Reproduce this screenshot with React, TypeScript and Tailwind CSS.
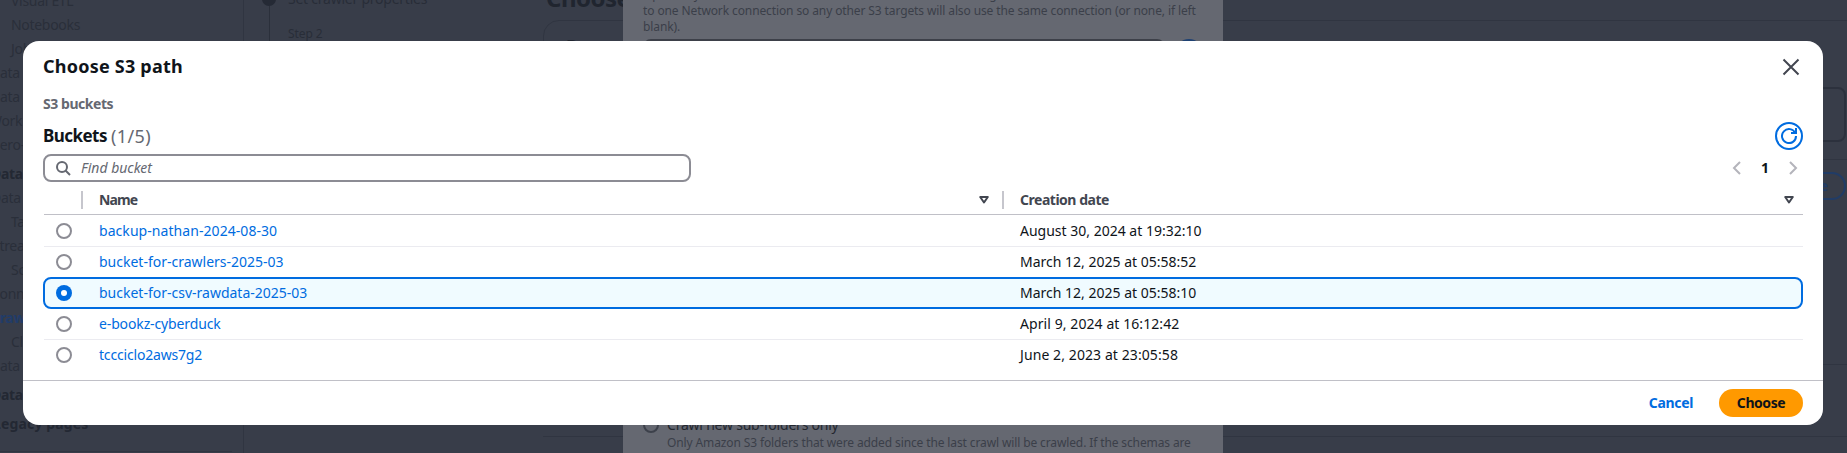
import type { ReactNode } from "react";

type NavItem = { label: string; className: string };

const NAV: NavItem[] = [
  { label: "Visual ETL", className: "pl-[11px]" },
  { label: "Notebooks", className: "pl-[11px]" },
  { label: "Job run", className: "pl-[11px]" },
  { label: "Data", className: "-ml-[10px]" },
  { label: "Data", className: "-ml-[10px]" },
  { label: "Work", className: "-ml-[11px]" },
  { label: "Zero-", className: "-ml-[8px]" },
  { label: "Data", className: "-ml-[9px] mt-[5px] font-bold text-[#232833]" },
  { label: "Data", className: "-ml-[9px]" },
  { label: "Tabl", className: "pl-[11px]" },
  { label: "Strea", className: "-ml-[8px]" },
  { label: "Sch", className: "pl-[11px]" },
  { label: "Conn", className: "-ml-[9px]" },
  { label: "Craw", className: "-ml-[9px] font-bold text-[#213c69]" },
  { label: "Clas", className: "pl-[11px]" },
  { label: "Data", className: "-ml-[10px]" },
  { label: "Data", className: "-ml-[9px] mt-[5px] font-bold text-[#232833]" },
  { label: "Legacy pages", className: "-ml-[7px] mt-[5px] font-bold tracking-[0.15px] text-[#232833]" },
];

type Bucket = {
  name: string;
  date: string;
  selected?: boolean;
  row: string;
  nameTracking?: string;
  dateTracking?: string;
};

const BUCKETS: Bucket[] = [
  { name: "backup-nathan-2024-08-30", date: "August 30, 2024 at 19:32:10", row: "ml-px h-8 border-b border-[#ebebf0] pl-3", nameTracking: "tracking-[0.06px]" },
  { name: "bucket-for-crawlers-2025-03", date: "March 12, 2025 at 05:58:52", row: "ml-px h-[30px] pl-3" },
  { name: "bucket-for-csv-rawdata-2025-03", date: "March 12, 2025 at 05:58:10", selected: true, row: "h-8 rounded-lg border-2 border-[#006ce0] bg-[#f0fbff] pl-[11px]" },
  { name: "e-bookz-cyberduck", date: "April 9, 2024 at 16:12:42", row: "ml-px h-[31px] border-b border-[#ebebf0] pl-3", nameTracking: "tracking-[-0.13px]", dateTracking: "tracking-[0.08px]" },
  { name: "tccciclo2aws7g2", date: "June 2, 2023 at 23:05:58", row: "ml-px h-[30px] pl-3", nameTracking: "tracking-[-0.18px]", dateTracking: "tracking-[0.09px]" },
];

function Icon({ size, className, children }: { size: number; className?: string; children: ReactNode }) {
  return (
    <svg width={size} height={size} viewBox="0 0 16 16" fill="none" stroke="currentColor" strokeWidth="2" className={className}>
      {children}
    </svg>
  );
}

function SortCaret() {
  return (
    <Icon size={16} className="text-[#424650]">
      <path d="M4.2 5h7.6L8 10.5z" strokeLinejoin="round" />
    </Icon>
  );
}

function Radio({ selected }: { selected?: boolean }) {
  return selected ? (
    <span className="flex h-4 w-4 shrink-0 items-center justify-center rounded-full bg-[#006ce0]">
      <span className="h-1.5 w-1.5 rounded-full bg-white" />
    </span>
  ) : (
    <span className="h-4 w-4 shrink-0 rounded-full border-2 border-[#8c8c94] bg-white" />
  );
}

function Backdrop() {
  return (
    <div className="flex h-full">
      <nav className="flex h-full w-[244px] shrink-0 flex-col overflow-hidden border-r border-[#303541] text-sm leading-6 tracking-[-0.3px] text-[#2a2f3a]">
        <div className="-mt-[11px] flex flex-col">
          {NAV.map((item, i) => (
            <div key={i} className={`h-6 whitespace-nowrap ${item.className}`}>{item.label}</div>
          ))}
        </div>
        <div className="mt-[15px] mr-[11px] border-t border-[#303541]" />
      </nav>

      <div className="flex w-[299px] shrink-0 pl-[18px]">
        <div className="flex w-[14px] flex-col items-center">
          <span className="-mt-2 h-[14px] w-[14px] shrink-0 rounded-full bg-[#252a35]" />
          <span className="h-10 w-px bg-[#2b303b]" />
        </div>
        <div className="pl-3 whitespace-nowrap text-[#282d38]">
          <div className="-mt-[13px] h-6 text-sm leading-6 tracking-[-0.24px]">Set crawler properties</div>
          <div className="mt-[11px] text-xs leading-6 tracking-[-0.1px]">Step 2</div>
        </div>
      </div>

      <main className="flex min-w-0 flex-1 flex-col text-[#20252f]">
        <div className="-mt-4 h-9 pl-[3px] text-2xl leading-7 font-bold tracking-[-0.5px]">Choose</div>
        <div className="-mr-5 flex h-[345px] flex-col rounded-tl-2xl border border-[#303541]">
          <div className="mt-[13px] pl-[22px] text-lg leading-6 font-bold tracking-[-0.4px]">Data sources</div>
          <div className="mt-[29px] mr-5 h-[55px] rounded-lg border-2 border-[#2c313d]" />
          <div className="mt-[17px] border-t border-[#303541]" />
          <div className="mt-3 mr-5 ml-auto flex h-7 w-[84px] items-center justify-end rounded-full border-2 border-[#213c66] pr-4 text-sm font-bold text-[#213c66]">Update</div>
        </div>
        <div className="mt-[71px] border-t border-[#303541]" />
      </main>
    </div>
  );
}

function SidePanel() {
  return (
    <section className="absolute top-0 left-[623px] flex h-full w-[600px] flex-col overflow-hidden bg-[#656871] pl-5 text-xs leading-4 whitespace-nowrap text-[#3b3f49]">
      <div className="-mt-[13px] h-4 tracking-[-0.11px]">Optionally include a Network connection to use with this S3 target. Note that each</div>
      <div className="h-4 tracking-[-0.11px]">to one Network connection so any other S3 targets will also use the same connection (or none, if left</div>
      <div className="h-4 tracking-[-0.11px]">blank).</div>
      <div className="mt-1 flex gap-[10px]">
        <div className="h-7 w-[522px] rounded-lg border-2 border-[#3d4049]" />
        <div className="h-7 w-7 rounded-full border-2 border-[#1f4273]" />
      </div>
      <div className="mt-[348px] flex gap-2">
        <span className="mt-[2px] h-4 w-4 shrink-0 rounded-full border-2 border-[#3d414b]" />
        <div>
          <div className="h-5 text-sm leading-5 tracking-[-0.22px] text-[#23272f]">Crawl new sub-folders only</div>
          <div className="mt-0 tracking-[-0.12px]">Only Amazon S3 folders that were added since the last crawl will be crawled. If the schemas are</div>
        </div>
      </div>
    </section>
  );
}

function ChooseDialog() {
  return (
    <div role="dialog" className="absolute top-[41px] left-[23px] flex h-[384px] w-[1800px] flex-col rounded-2xl bg-white text-sm text-[#0f141a]">
      <header className="flex h-[50px] shrink-0 items-center justify-between pr-[22px] pl-5">
        <h1 className="text-lg font-bold tracking-[0.22px]">Choose S3 path</h1>
        <button aria-label="Close">
          <svg width="20" height="20" viewBox="0 0 20 20" fill="none" stroke="#424650" strokeWidth="2" className="mt-px">
            <path d="m2.5 2.5 15 15M17.5 2.5l-15 15" />
          </svg>
        </button>
      </header>

      <div className="px-5">
        <div className="mb-px flex h-[26px] items-center font-bold tracking-[-0.45px] text-[#656871]">S3 buckets</div>
        <div className="flex h-9 items-center justify-between">
          <h2 className="flex items-center text-[17px] leading-6">
            <span className="w-[68px] font-bold tracking-[-0.55px]">Buckets</span>
            <span className="text-[18px] tracking-[0.4px] text-[#656871]">(1/5)</span>
          </h2>
          <button aria-label="Refresh" className="flex h-7 w-7 items-center justify-center rounded-full border-2 border-[#006ce0] text-[#006ce0]">
            <Icon size={16}>
              <path d="M10 5h5V0" />
              <path d="M15 8a7 7 0 1 1-.7-3" />
            </Icon>
          </button>
        </div>
        <div className="flex h-7 items-center justify-between">
          <div className="flex h-7 w-[648px] items-center rounded-lg border-2 border-[#8c8c94] pl-[10px]">
            <Icon size={16} className="text-[#656871]">
              <circle cx="7" cy="7" r="5" />
              <path d="m15 15-4.5-4.5" />
            </Icon>
            <span className="pb-px pl-[10px] text-[#656871] italic">Find bucket</span>
          </div>
          <div className="flex items-center pr-[2px]">
            <Icon size={16} className="text-[#b4b4bb]">
              <path d="M11 2 5 8l6 6" />
            </Icon>
            <span className="w-10 text-center font-bold">1</span>
            <Icon size={16} className="text-[#b4b4bb]">
              <path d="m5 2 6 6-6 6" />
            </Icon>
          </div>
        </div>

        <div className="ml-px flex h-[33px] items-center border-b border-[#c0c0c7] pt-1 font-bold text-[#424650]">
          <span className="ml-[37px] h-[18px] w-[2px] bg-[#c6c6cd]" />
          <span className="w-[893px] pl-4 tracking-[-0.9px]">Name</span>
          <SortCaret />
          <span className="mr-4 ml-[10px] h-[18px] w-[2px] bg-[#c6c6cd]" />
          <span className="flex-1 tracking-[-0.48px]">Creation date</span>
          <span className="pr-[6px]"><SortCaret /></span>
        </div>

        {BUCKETS.map((b) => (
          <div key={b.name} className={`flex items-center ${b.row}`}>
            <Radio selected={b.selected} />
            <a className={`w-[948px] pl-[27px] text-[#006ce0] ${b.nameTracking ?? ""}`}>{b.name}</a>
            <span className={b.dateTracking ?? ""}>{b.date}</span>
          </div>
        ))}
      </div>

      <footer className="mt-auto flex h-[45px] items-center justify-end gap-[26px] border-t border-[#c0c0c7] pr-5 font-bold">
        <button className="tracking-[-0.35px] text-[#006ce0]">Cancel</button>
        <button className="h-7 w-[84px] rounded-full bg-[#ff9900] tracking-[-0.45px]">Choose</button>
      </footer>
    </div>
  );
}

export default function App() {
  return (
    <div className="relative h-[453px] w-[1847px] overflow-hidden bg-[#383d49] font-['Noto_Sans','Open_Sans',sans-serif]">
      <Backdrop />
      <SidePanel />
      <ChooseDialog />
    </div>
  );
}
